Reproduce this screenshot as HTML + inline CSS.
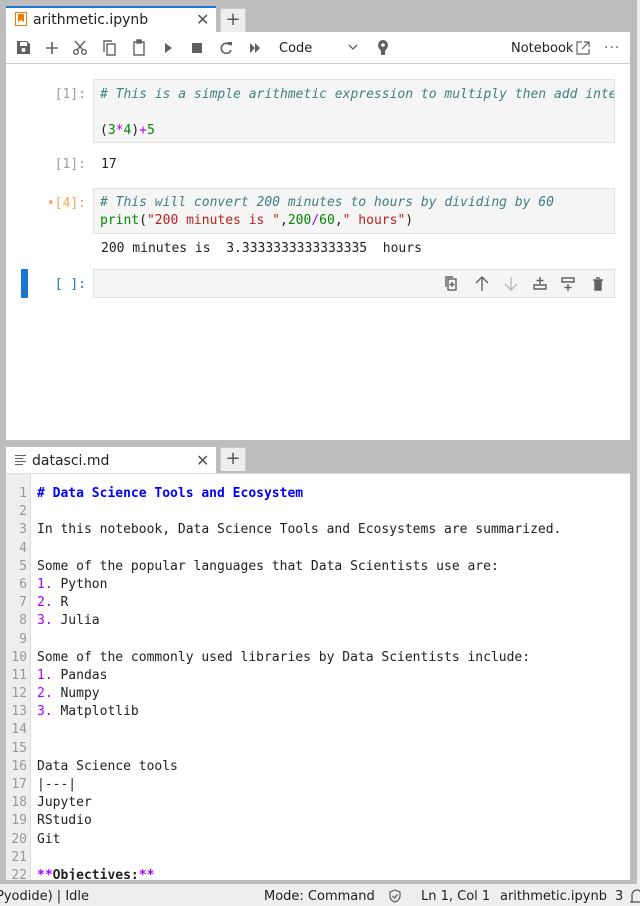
<!DOCTYPE html>
<html><head><style>
*{margin:0;padding:0;box-sizing:border-box}
body{width:640px;height:906px;background:#bdbdbd;position:relative;overflow:hidden;font-family:"DejaVu Sans","Liberation Sans",sans-serif;font-size:13px;color:#212121}
.abs{position:absolute}
.mono{font-family:"DejaVu Sans Mono","Liberation Mono",monospace;font-size:13px;white-space:pre}
.tab{background:#fff;height:26px}
.plus{background:#eee;border:1px solid #ccc;border-bottom:none;width:26px;height:24px;text-align:center;line-height:22px;font-size:18px;color:#555}
.cell{background:#f5f5f5;border:1px solid #e0e0e0}
.prompt{color:#9e9e9e;text-align:right;width:80px}
.cm{color:#408080;font-style:italic}
.ed{position:absolute;left:-6px;top:11px;width:640px;font-family:"DejaVu Sans Mono","Liberation Mono",monospace;font-size:13px;line-height:18.2px}
.ed div{position:relative;height:18.2px}
.ln{position:absolute;left:0;width:27px;text-align:right;color:#999;white-space:pre}
.tx{position:absolute;left:37px;white-space:pre}
.p{color:#a0f}
</style></head><body>
<div class="abs" style="left:637px;top:0;width:3px;height:884px;background:#eee"></div>
<div class="abs tab" style="left:6px;top:6px;width:210px;border-top:2px solid #1976d2"></div>
<svg class="abs" style="left:15px;top:12px" width="12" height="14"><rect x="0.5" y="0.5" width="11" height="13" fill="#fff" stroke="#f57c00"/><path d="M3 2h6v8l-3-2-3 2z" fill="#f57c00"/></svg>
<div class="abs" style="left:33px;top:12px;font-size:14px">arithmetic.ipynb</div>
<div class="abs" style="left:196px;top:10px;font-size:16px;color:#555">✕</div>
<div class="abs plus" style="left:220px;top:8px">+</div>
<div class="abs" style="left:6px;top:32px;width:624px;height:408px;background:#fff"></div>
<div class="abs" style="left:6px;top:63px;width:624px;height:1px;background:#ccc"></div>
<svg class="abs" style="left:14px;top:38px" width="390" height="20" fill="#616161">
<path d="M3 3h10l3 3v10H3z M6 4v4h7V4z" fill-rule="evenodd"/><circle cx="9.5" cy="12" r="2" fill="#fff"/>
<path d="M38 4v12M32 10h12" stroke="#616161" stroke-width="1.6"/>
<g stroke="#616161" stroke-width="1.4" fill="none"><circle cx="62" cy="14" r="2.3"/><circle cx="70" cy="14" r="2.3"/><path d="M63 12l8-9M69 12l-8-9"/></g>
<g stroke="#616161" stroke-width="1.4" fill="none"><rect x="93" y="6" width="8" height="11"/><path d="M90 14V3h8"/></g>
<g stroke="#616161" stroke-width="1.4" fill="none"><rect x="120" y="4" width="10" height="13"/><rect x="123" y="2" width="4" height="3" fill="#616161"/></g>
<path d="M151 5l7 5-7 5z"/>
<rect x="178" y="5" width="10" height="10"/>
<g stroke="#616161" stroke-width="1.6" fill="none"><path d="M216 7a5 5 0 1 0 1 5"/></g><path d="M213 4l5 0 0 4z"/>
<path d="M236 5l5 5-5 5zM241 5l5 5-5 5z"/>
<path d="M335 7l4 4 4-4" stroke="#616161" stroke-width="1.3" fill="none"/>
<path d="M369 2a5 5 0 0 1 5 5c0 3-3 5-3 7v3h-4v-3c0-2-3-4-3-7a5 5 0 0 1 5-5z"/><circle cx="369" cy="7" r="1.8" fill="#fff"/>
</svg>
<div class="abs" style="left:279px;top:41px;font-size:13px">Code</div>
<div class="abs" style="left:511px;top:41px;font-size:13px">Notebook</div>
<svg class="abs" style="left:575px;top:40px" width="16" height="16" fill="none" stroke="#616161" stroke-width="1.2"><path d="M7 2H2v12h12V9M9 2h5v5M14 2L7 9"/></svg>
<div class="abs" style="left:604px;top:40px;font-size:14px;color:#616161;letter-spacing:1px">···</div>

<div class="abs mono prompt" style="left:6px;top:87px">[1]:</div>
<div class="abs cell" style="left:93px;top:79px;width:522px;height:64px;overflow:hidden"></div>
<div class="abs mono cm" style="left:100px;top:87px;width:514px;overflow:hidden"># This is a simple arithmetic expression to multiply then add integers</div>
<div class="abs mono" style="left:100px;top:123px">(<span style="color:#080">3</span><span style="color:#a0f">*</span><span style="color:#080">4</span>)<span style="color:#a0f">+</span><span style="color:#080">5</span></div>
<div class="abs mono prompt" style="left:6px;top:157px">[1]:</div>
<div class="abs mono" style="left:101px;top:157px">17</div>

<div class="abs mono prompt" style="left:6px;top:196px;color:#f5a65b">•[4]:</div>
<div class="abs cell" style="left:93px;top:188px;width:522px;height:46px"></div>
<div class="abs mono cm" style="left:100px;top:195px"># This will convert 200 minutes to hours by dividing by 60</div>
<div class="abs mono" style="left:100px;top:213px"><span style="color:#080">print</span>(<span style="color:#ba2121">"200 minutes is "</span>,<span style="color:#080">200</span><span style="color:#a0f">/</span><span style="color:#080">60</span>,<span style="color:#ba2121">" hours"</span>)</div>
<div class="abs mono" style="left:101px;top:241px">200 minutes is  3.3333333333333335  hours</div>

<div class="abs" style="left:21px;top:269px;width:7px;height:29px;background:#1976d2;border-radius:1px"></div>
<div class="abs mono prompt" style="left:6px;top:277px;color:#1976d2">[ ]:</div>
<div class="abs cell" style="left:93px;top:269px;width:522px;height:29px"></div>
<svg class="abs" style="left:440px;top:274px" width="170" height="20" fill="none" stroke="#616161" stroke-width="1.4">
<rect x="8" y="5" width="8" height="11"/><path d="M6 13V3h7M12 8v5M9.5 10.5h5"/>
<path d="M42 17V4M36 9l6-6 6 6"/>
<path d="M71 3v13M65 10l6 6 6-6" stroke="#bdbdbd"/>
<path d="M100 3v7M96.5 6.5h7M94 11h12v4H94z"/>
<path d="M122 4h12v4h-12zM128 10v7M124.5 13.5h7"/>
<path d="M153 6h10M155 6v10h6V6M156 4h4" fill="#616161" stroke="#616161"/>
</svg>

<div class="abs tab" style="left:6px;top:447px;width:210px"></div>
<svg class="abs" style="left:15px;top:454px" width="12" height="12" stroke="#616161" stroke-width="1"><path d="M0 1.5h11M0 4.5h8M0 7.5h11M0 10.5h8"/></svg>
<div class="abs" style="left:32px;top:453px;font-size:14px">datasci.md</div>
<div class="abs" style="left:196px;top:451px;font-size:16px;color:#555">✕</div>
<div class="abs plus" style="left:220px;top:447px">+</div>
<div class="abs" style="left:6px;top:473px;width:624px;height:407px;background:#fff;border-top:1px solid #ddd;overflow:hidden">
<div class="abs" style="left:0;top:0;width:25px;height:407px;background:#eee;border-right:1px solid #ddd"></div>
<div class="ed">
<div><span class="ln">1</span><span class="tx" style="color:#00f;font-weight:bold"># Data Science Tools and Ecosystem</span></div>
<div><span class="ln">2</span></div>
<div><span class="ln">3</span><span class="tx">In this notebook, Data Science Tools and Ecosystems are summarized.</span></div>
<div><span class="ln">4</span></div>
<div><span class="ln">5</span><span class="tx">Some of the popular languages that Data Scientists use are:</span></div>
<div><span class="ln">6</span><span class="tx"><span class="p">1.</span> Python</span></div>
<div><span class="ln">7</span><span class="tx"><span class="p">2.</span> R</span></div>
<div><span class="ln">8</span><span class="tx"><span class="p">3.</span> Julia</span></div>
<div><span class="ln">9</span></div>
<div><span class="ln">10</span><span class="tx">Some of the commonly used libraries by Data Scientists include:</span></div>
<div><span class="ln">11</span><span class="tx"><span class="p">1.</span> Pandas</span></div>
<div><span class="ln">12</span><span class="tx"><span class="p">2.</span> Numpy</span></div>
<div><span class="ln">13</span><span class="tx"><span class="p">3.</span> Matplotlib</span></div>
<div><span class="ln">14</span></div>
<div><span class="ln">15</span></div>
<div><span class="ln">16</span><span class="tx">Data Science tools</span></div>
<div><span class="ln">17</span><span class="tx">|---|</span></div>
<div><span class="ln">18</span><span class="tx">Jupyter</span></div>
<div><span class="ln">19</span><span class="tx">RStudio</span></div>
<div><span class="ln">20</span><span class="tx">Git</span></div>
<div><span class="ln">21</span></div>
<div><span class="ln">22</span><span class="tx" style="font-weight:bold"><span class="p">**</span>Objectives:<span class="p">**</span></span></div>
</div>
</div>

<div class="abs" style="left:0;top:884px;width:640px;height:22px;background:#eee;font-size:13px">
<span class="abs" style="left:-4px;top:5px">Pyodide) | Idle</span>
<span class="abs" style="left:264px;top:5px">Mode: Command</span>
<svg class="abs" style="left:388px;top:5px" width="14" height="14" fill="none" stroke="#555" stroke-width="1.2"><path d="M7 1l5 2v4c0 3-2 5-5 6-3-1-5-3-5-6V3z"/><path d="M4.5 7l2 2 3-3.5"/></svg>
<span class="abs" style="left:421px;top:5px">Ln 1, Col 1</span>
<span class="abs" style="left:500px;top:5px">arithmetic.ipynb</span>
<span class="abs" style="left:615px;top:5px">3</span>
<svg class="abs" style="left:630px;top:3px" width="12" height="18" fill="none" stroke="#555" stroke-width="1.3"><path d="M2 15V8a5 5 0 0 1 10 0"/><path d="M0 15h12"/></svg>
</div>
</body></html>
